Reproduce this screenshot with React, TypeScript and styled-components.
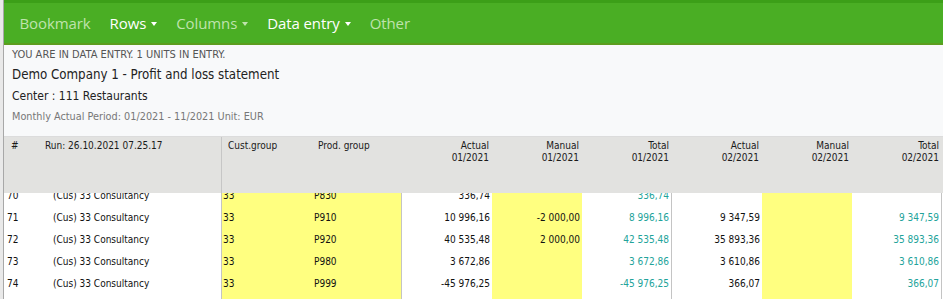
import React from 'react';
import styled, { createGlobalStyle } from 'styled-components';

const GlobalStyle = createGlobalStyle`
  html, body {
    margin: 0;
    padding: 0;
    height: 100%;
    background: #e9e9e9;
  }
  #root {
    height: 100%;
  }
`;

const COLS = '36px 182px 90px 90px 90px 90px 90px 90px 90px 90px';
const TABLE_FONT = `"DejaVu Sans Condensed", "DejaVu Sans", Verdana, sans-serif`;

const StyledPage = styled.div`
  display: flex;
  flex-direction: column;
  height: 100vh;
  margin-left: 3px;
  border-left: 1px solid #a8a8a8;
  background: #fff;
  overflow: hidden;
`;

const StyledNav = styled.nav`
  display: flex;
  align-items: center;
  height: 40px;
  padding: 0 6px;
  background-color: #4aae24;
  border-top: 3px solid #3c9f18;
  border-bottom: 2px solid #5c9d1e;
  font-family: 'Open Sans', 'Noto Sans', sans-serif;
  font-size: 15px;
`;

const StyledNavItem = styled.div<{ active?: boolean }>`
  display: flex;
  align-items: center;
  padding: 0 9.5px;
  color: ${props => props.active ? '#ffffff' : '#bfe3ad'};
  letter-spacing: -0.1px;
  white-space: nowrap;
  cursor: pointer;
`;

const StyledCaret = styled.span`
  display: inline-block;
  margin-left: 5px;
  margin-top: 1px;
  border-left: 3.5px solid transparent;
  border-right: 3.5px solid transparent;
  border-top: 4px solid currentColor;
`;

const StyledInfo = styled.section`
  display: flex;
  flex-direction: column;
  box-sizing: border-box;
  padding: 0 8px;
  height: 92px;
  background: #f8f9fa;
  border-bottom: 1px solid #dcdcdc;
  font-family: ${TABLE_FONT};
`;

const StyledInfoLine = styled.div<{ size: number; color: string; height: number }>`
  font-size: ${props => props.size}px;
  color: ${props => props.color};
  line-height: ${props => props.height}px;
  white-space: nowrap;
`;

const StyledTable = styled.div`
  display: flex;
  flex-direction: column;
  flex: 1;
  min-height: 0;
  font-family: ${TABLE_FONT};
  font-size: 10px;
  color: #1a1a1a;
`;

const StyledHeadRow = styled.div`
  display: grid;
  grid-template-columns: ${COLS};
  height: 56px;
  background: #e2e2e0;
  position: relative;
  z-index: 1;
`;

const StyledHeadCell = styled.div<{ align?: 'left' | 'right'; pad?: number; divider?: boolean }>`
  box-sizing: border-box;
  padding-top: 3px;
  padding-left: ${props => props.pad ?? 0}px;
  padding-right: 3px;
  text-align: ${props => props.align ?? 'left'};
  line-height: 12px;
  white-space: nowrap;
  border-right: ${props => props.divider ? '1px solid #c6c6c6' : 'none'};
`;

const StyledScroller = styled.div`
  flex: 1;
  min-height: 0;
  overflow: hidden;
`;

const StyledRows = styled.div`
  margin-top: -9px;
`;

const StyledRow = styled.div`
  display: grid;
  grid-template-columns: ${COLS};
  height: 22px;
`;

const StyledCell = styled.div<{ align?: 'left' | 'right'; pad?: number; yellow?: boolean; divider?: boolean; total?: boolean }>`
  box-sizing: border-box;
  display: flex;
  align-items: center;
  justify-content: ${props => props.align === 'right' ? 'flex-end' : 'flex-start'};
  padding-left: ${props => props.pad ?? 0}px;
  padding-right: ${props => props.align === 'right' ? 2 : 0}px;
  background: ${props => props.yellow ? '#ffff80' : '#ffffff'};
  color: ${props => props.total ? '#22a39a' : '#111'};
  border-right: ${props => props.divider ? '1px solid #c4c4c4' : 'none'};
  white-space: nowrap;
`;

interface IRow {
    n: number | string;
    desc: string;
    cust: string;
    prod: string;
    a1: string;
    m1: string;
    t1: string;
    a2: string;
    m2: string;
    t2: string;
}

const ROWS: IRow[] = [
    { n: 70, desc: '(Cus) 33 Consultancy', cust: '33', prod: 'P830', a1: '336,74', m1: '', t1: '336,74', a2: '', m2: '', t2: '' },
    { n: 71, desc: '(Cus) 33 Consultancy', cust: '33', prod: 'P910', a1: '10 996,16', m1: '-2 000,00', t1: '8 996,16', a2: '9 347,59', m2: '', t2: '9 347,59' },
    { n: 72, desc: '(Cus) 33 Consultancy', cust: '33', prod: 'P920', a1: '40 535,48', m1: '2 000,00', t1: '42 535,48', a2: '35 893,36', m2: '', t2: '35 893,36' },
    { n: 73, desc: '(Cus) 33 Consultancy', cust: '33', prod: 'P980', a1: '3 672,86', m1: '', t1: '3 672,86', a2: '3 610,86', m2: '', t2: '3 610,86' },
    { n: 74, desc: '(Cus) 33 Consultancy', cust: '33', prod: 'P999', a1: '-45 976,25', m1: '', t1: '-45 976,25', a2: '366,07', m2: '', t2: '366,07' },
    { n: '', desc: '', cust: '', prod: '', a1: '', m1: '', t1: '', a2: '', m2: '', t2: '' }
];

const PERIODS = ['01/2021', '02/2021'];

export default function App() {
    return (
        <StyledPage>
            <GlobalStyle />
            <StyledNav>
                <StyledNavItem>Bookmark</StyledNavItem>
                <StyledNavItem active>Rows<StyledCaret /></StyledNavItem>
                <StyledNavItem>Columns<StyledCaret /></StyledNavItem>
                <StyledNavItem active>Data entry<StyledCaret /></StyledNavItem>
                <StyledNavItem>Other</StyledNavItem>
            </StyledNav>

            <StyledInfo>
                <StyledInfoLine size={11} color='#555' height={19}>YOU ARE IN DATA ENTRY. 1 UNITS IN ENTRY.</StyledInfoLine>
                <StyledInfoLine size={13.2} color='#222' height={22}>Demo Company 1 - Profit and loss statement</StyledInfoLine>
                <StyledInfoLine size={12} color='#222' height={20}>Center : 111 Restaurants</StyledInfoLine>
                <StyledInfoLine size={10.8} color='#777' height={21}>Monthly Actual Period: 01/2021 - 11/2021 Unit: EUR</StyledInfoLine>
            </StyledInfo>

            <StyledTable>
                <StyledHeadRow>
                    <StyledHeadCell pad={7}>#</StyledHeadCell>
                    <StyledHeadCell pad={5} divider>Run: 26.10.2021 07.25.17</StyledHeadCell>
                    <StyledHeadCell pad={6}>Cust.group</StyledHeadCell>
                    <StyledHeadCell pad={6}>Prod. group</StyledHeadCell>
                    {PERIODS.map(p => (
                        <React.Fragment key={p}>
                            <StyledHeadCell align='right'>Actual<br />{p}</StyledHeadCell>
                            <StyledHeadCell align='right'>Manual<br />{p}</StyledHeadCell>
                            <StyledHeadCell align='right'>Total<br />{p}</StyledHeadCell>
                        </React.Fragment>
                    ))}
                </StyledHeadRow>

                <StyledScroller>
                    <StyledRows>
                        {ROWS.map((r, i) => (
                            <StyledRow key={i}>
                                <StyledCell pad={3}>{r.n}</StyledCell>
                                <StyledCell pad={13} divider>{r.desc}</StyledCell>
                                <StyledCell pad={1} yellow>{r.cust}</StyledCell>
                                <StyledCell pad={2} yellow divider>{r.prod}</StyledCell>
                                <StyledCell align='right'>{r.a1}</StyledCell>
                                <StyledCell align='right' yellow>{r.m1}</StyledCell>
                                <StyledCell align='right' total divider>{r.t1}</StyledCell>
                                <StyledCell align='right'>{r.a2}</StyledCell>
                                <StyledCell align='right' yellow>{r.m2}</StyledCell>
                                <StyledCell align='right' total divider>{r.t2}</StyledCell>
                            </StyledRow>
                        ))}
                    </StyledRows>
                </StyledScroller>
            </StyledTable>
        </StyledPage>
    );
}
